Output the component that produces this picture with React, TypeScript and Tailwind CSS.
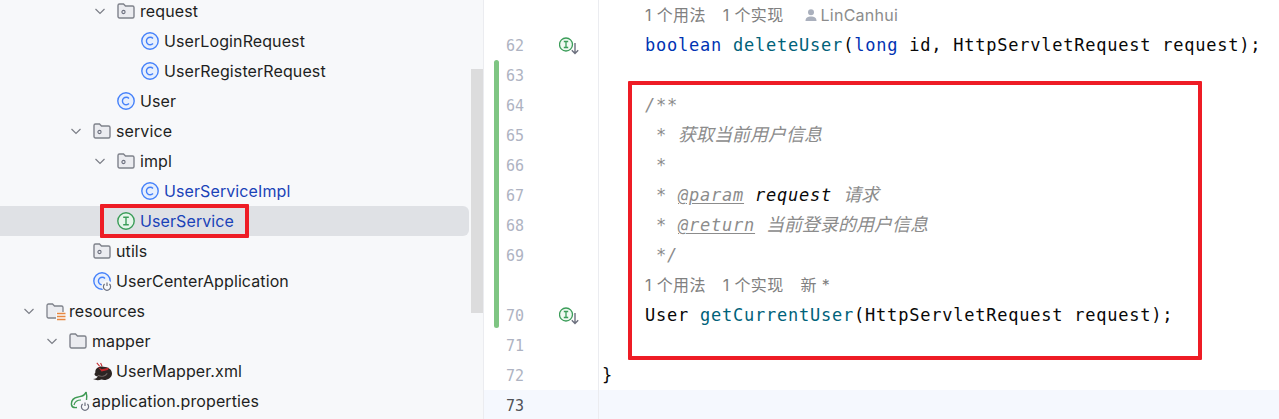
import type { ReactNode } from 'react'

const ui = 'font-["Inter","Noto_Sans_CJK_SC",sans-serif]'

function Chevron() {
  return (
    <svg width="16" height="16" viewBox="0 0 16 16" fill="none" stroke="#7c7f87" strokeWidth="1.2" className="shrink-0">
      <path d="M3.5 6 L8 10.5 L12.5 6" />
    </svg>
  )
}

function PackageIcon() {
  return (
    <svg width="18" height="16" viewBox="0 0 18 16" fill="none" className="-ml-px shrink-0">
      <path
        d="M1 2.5 A1.5 1.5 0 0 1 2.5 1 H6.5 L8.5 3 H15.5 A1.5 1.5 0 0 1 17 4.5 V13.5 A1.5 1.5 0 0 1 15.5 15 H2.5 A1.5 1.5 0 0 1 1 13.5 Z"
        fill="#ebecf0"
        stroke="#7f828b"
        strokeWidth="1.4"
      />
      <circle cx="6.5" cy="9" r="1.6" stroke="#6c707e" strokeWidth="1.1" fill="none" />
    </svg>
  )
}

function FolderIcon() {
  return (
    <svg width="18" height="16" viewBox="0 0 18 16" fill="none" className="-ml-px shrink-0">
      <path
        d="M1 2.5 A1.5 1.5 0 0 1 2.5 1 H6.5 L8.5 3 H15.5 A1.5 1.5 0 0 1 17 4.5 V13.5 A1.5 1.5 0 0 1 15.5 15 H2.5 A1.5 1.5 0 0 1 1 13.5 Z"
        fill="#ebecf0"
        stroke="#7f828b"
        strokeWidth="1.4"
      />
    </svg>
  )
}

function ResourcesIcon() {
  return (
    <svg width="20" height="18" viewBox="0 0 20 18" fill="none" className="-ml-px mt-[2px] shrink-0">
      <path
        d="M1 2.5 A1.5 1.5 0 0 1 2.5 1 H6.5 L8.5 3 H15.5 A1.5 1.5 0 0 1 17 4.5 V13.5 A1.5 1.5 0 0 1 15.5 15 H2.5 A1.5 1.5 0 0 1 1 13.5 Z"
        fill="#ebecf0"
        stroke="#7f828b"
        strokeWidth="1.3"
      />
      <rect x="10" y="9" width="10" height="9" fill="#f7f8fa" />
      <path d="M11 10.5 H19.5 M11 13.5 H19.5 M11 16.5 H19.5" stroke="#e8873f" strokeWidth="1.6" />
    </svg>
  )
}

function ClassIcon({ run }: { run?: boolean }) {
  return (
    <svg width="18" height="18" viewBox="0 0 18 18" fill="none" className="-ml-px shrink-0 overflow-visible">
      <circle cx="9" cy="9" r="8.2" fill="#e7effd" stroke="#4682fa" strokeWidth="1.4" />
      <path d="M12 6.4 A3.8 3.8 0 1 0 12 11.6" stroke="#4682fa" strokeWidth="1.4" />
      {run && (
        <>
          <circle cx="14" cy="14" r="5.5" fill="#f7f8fa" />
          <path d="M14 10.5 V14 M11.6 12 A3.6 3.6 0 1 0 16.4 12" stroke="#6c707e" strokeWidth="1.2" />
        </>
      )}
    </svg>
  )
}

function InterfaceIcon() {
  return (
    <svg width="18" height="18" viewBox="0 0 18 18" fill="none" className="-ml-px shrink-0">
      <circle cx="9" cy="9" r="8.2" fill="#e6f5ea" stroke="#3b9d59" strokeWidth="1.4" />
      <path d="M6.2 5.2 H11.8 M9 5.2 V12.8 M6.2 12.8 H11.8" stroke="#3b9d59" strokeWidth="1.4" />
    </svg>
  )
}

function BirdIcon() {
  return (
    <svg width="19" height="19" viewBox="0 0 20 20" fill="none" className="-ml-[1px] shrink-0">
      <path d="M0 18 C3 18 4.5 16.5 5 15 C2 15 0.5 13 2.5 11 C2 7 6 4 11 5 C16 5 20 8 20 12 C20 17 14 20 9 18.5 C6 19.5 3 19.5 0 18 Z" fill="#2c2523" />
      <path d="M5 5 L9 7.5 L17 6 L15.5 8.5 L9 10 Z" fill="#c6272c" />
      <path d="M4 1 L7 4.5 M8 1 L9.5 4.5" stroke="#c6272c" strokeWidth="1.1" />
      <path d="M5 14 C9 16 13 15 15 12" stroke="#6d6360" strokeWidth="1.1" />
    </svg>
  )
}

function SpringIcon() {
  return (
    <svg width="20" height="20" viewBox="0 0 20 20" fill="none" className="shrink-0">
      <path d="M16 1 C15 5 12 5 8 6 C3 7 1 10 1.5 14 C2 16 4 17 7 16.5" stroke="#3f9a54" strokeWidth="1.4" />
      <path d="M4 14 C5 10 8 9 11 9" stroke="#3f9a54" strokeWidth="1.2" />
      <path d="M16 1 C17 4 17 6 16.5 9" stroke="#3f9a54" strokeWidth="1.4" />
      <circle cx="15" cy="15" r="5" fill="#f7f8fa" />
      <path d="M15 11.5 V15 M12.6 13 A3.6 3.6 0 1 0 17.4 13" stroke="#6c707e" strokeWidth="1.2" />
    </svg>
  )
}

function TreeRow({
  indent,
  open,
  icon,
  label,
  blue,
  selected,
}: {
  indent: string
  open?: boolean
  icon: ReactNode
  label: string
  blue?: boolean
  selected?: boolean
}) {
  return (
    <div className={`flex h-[30px] w-[469px] items-center rounded-r-md ${indent} ${selected ? 'bg-[#dfe1e5]' : ''}`}>
      <span className="flex w-[16px] shrink-0 justify-center">{open && <Chevron />}</span>
      <span className="ml-[10px] flex w-[16px] shrink-0 items-center">{icon}</span>
      <span className={`ml-[6px] text-[16px] tracking-[0.1px] ${blue ? 'text-[#1a43b8]' : 'text-[#1e1f22]'}`}>{label}</span>
    </div>
  )
}

function Sidebar() {
  return (
    <aside className={`relative w-[484px] shrink-0 overflow-hidden border-r border-[#ebecf0] bg-[#f7f8fa] ${ui}`}>
      <div className="-mt-[4px]">
        <TreeRow indent="pl-[92px]" open icon={<PackageIcon />} label="request" />
        <TreeRow indent="pl-[116px]" icon={<ClassIcon />} label="UserLoginRequest" />
        <TreeRow indent="pl-[116px]" icon={<ClassIcon />} label="UserRegisterRequest" />
        <TreeRow indent="pl-[92px]" icon={<ClassIcon />} label="User" />
        <TreeRow indent="pl-[68px]" open icon={<PackageIcon />} label="service" />
        <TreeRow indent="pl-[92px]" open icon={<PackageIcon />} label="impl" />
        <TreeRow indent="pl-[116px]" icon={<ClassIcon />} label="UserServiceImpl" blue />
        <TreeRow indent="pl-[92px]" icon={<InterfaceIcon />} label="UserService" blue selected />
        <TreeRow indent="pl-[68px]" icon={<PackageIcon />} label="utils" />
        <TreeRow indent="pl-[68px]" icon={<ClassIcon run />} label="UserCenterApplication" />
        <TreeRow indent="pl-[21px]" open icon={<ResourcesIcon />} label="resources" />
        <TreeRow indent="pl-[44px]" open icon={<FolderIcon />} label="mapper" />
        <TreeRow indent="pl-[68px]" icon={<BirdIcon />} label="UserMapper.xml" />
        <TreeRow indent="pl-[44px]" icon={<SpringIcon />} label="application.properties" />
      </div>
      {/* overlay scrollbar */}
      <div className="absolute left-[471px] top-[69px] h-[244px] w-[12px] bg-[#dcdcdd]" />
      {/* annotation on the selected file */}
      <div className="absolute left-[100px] top-[204px] h-[34px] w-[149px] rounded-[1px] border-4 border-[#ee1c25]" />
    </aside>
  )
}

function GutterIcon() {
  return (
    <svg width="22" height="20" viewBox="0 0 22 20" fill="none" className="shrink-0">
      <circle cx="7" cy="7.5" r="6.5" fill="#f0f9f2" stroke="#3b9d59" strokeWidth="1.3" />
      <path d="M4.8 4.5 H9.2 M7 4.5 V10.5 M4.8 10.5 H9.2" stroke="#3b9d59" strokeWidth="1.3" />
      <path d="M16 6 V16.5 M12.8 13.3 L16 16.5 L19.2 13.3" stroke="#6c707e" strokeWidth="1.4" />
    </svg>
  )
}

const gutterRows: { num?: string; mark?: boolean; current?: boolean }[] = [
  {},
  { num: '62', mark: true },
  { num: '63' },
  { num: '64' },
  { num: '65' },
  { num: '66' },
  { num: '67' },
  { num: '68' },
  { num: '69' },
  {},
  { num: '70', mark: true },
  { num: '71' },
  { num: '72' },
  { num: '73', current: true },
]

function Gutter() {
  return (
    <div className='relative w-[115px] shrink-0 border-r border-[#ebecf0] font-["DejaVu_Sans_Mono",monospace] text-[15px]'>
      {gutterRows.map((row, i) => (
        <div key={i} className={`flex h-[30px] items-center pl-[22px] ${row.current ? 'bg-[#f5f8fe] text-[#4f5157]' : 'text-[#aeb3c2]'}`}>
          <span className="mt-[2px] w-[18px]">{row.num}</span>
          {row.mark && (
            <span className="ml-[35px] mt-[3px]">
              <GutterIcon />
            </span>
          )}
        </div>
      ))}
      {/* changed lines marker */}
      <div className="absolute left-[10px] top-[60px] h-[268px] w-[5px] rounded-full bg-[#7fc583]" />
    </div>
  )
}

function Hint({ children }: { children: ReactNode }) {
  return (
    <div className={`flex h-[30px] items-center pl-[46px] text-[16px] text-[#808080] ${ui}`}>{children}</div>
  )
}

function CodeLine({ children, current }: { children?: ReactNode; current?: boolean }) {
  return (
    <div className={`h-[30px] whitespace-pre pl-[46px] leading-[30px] ${current ? 'bg-[#f5f8fe]' : ''}`}>{children}</div>
  )
}

const cjk = 'text-[18px] tracking-normal'

function Editor() {
  const kw = 'text-[#0033b3]'
  const fn = 'text-[#00627a]'
  const doc = 'italic text-[#8c8c8c]'
  return (
    <main
      className='relative min-w-0 flex-1 overflow-hidden font-["DejaVu_Sans_Mono","Noto_Sans_CJK_SC",monospace] text-[17px] tracking-[0.77px] text-[#080808]'
    >
      <Hint>
        <span className="tracking-[0.35px]">1 个用法</span>
        <span className="ml-[17px] tracking-[0.35px]">1 个实现</span>
        <svg width="14" height="14" viewBox="0 0 14 14" fill="#aab0bd" className="ml-[20px] shrink-0">
          <circle cx="7" cy="4.2" r="3" />
          <path d="M1.5 13 C1.5 9.5 4 8.5 7 8.5 C10 8.5 12.5 9.5 12.5 13 Z" />
        </svg>
        <span className="ml-[3px] tracking-[0.25px] text-[#8c8c8c]">LinCanhui</span>
      </Hint>
      <CodeLine>
        <span className={kw}>boolean</span> <span className={fn}>deleteUser</span>(<span className={kw}>long</span> id, HttpServletRequest request);
      </CodeLine>
      <CodeLine />
      <CodeLine>
        <span className={doc}>/**</span>
      </CodeLine>
      <CodeLine>
        <span className={doc}>
          {' * '}
          <span className={cjk}>获取当前用户信息</span>
        </span>
      </CodeLine>
      <CodeLine>
        <span className={doc}> *</span>
      </CodeLine>
      <CodeLine>
        <span className={doc}>
          {' * '}
          <span className="underline underline-offset-2">@param</span>{' '}
          <span className="text-[#080808]">request</span>{' '}
          <span className={cjk}>请求</span>
        </span>
      </CodeLine>
      <CodeLine>
        <span className={doc}>
          {' * '}
          <span className="underline underline-offset-2">@return</span>{' '}
          <span className={cjk}>当前登录的用户信息</span>
        </span>
      </CodeLine>
      <CodeLine>
        <span className={doc}> */</span>
      </CodeLine>
      <Hint>
        <span className="tracking-[0.35px]">1 个用法</span>
        <span className="ml-[17px] tracking-[0.35px]">1 个实现</span>
        <span className="ml-[17px] tracking-[0.35px]">新 *</span>
      </Hint>
      <CodeLine>
        User <span className={fn}>getCurrentUser</span>(HttpServletRequest request);
      </CodeLine>
      <CodeLine />
      <div className="h-[30px] whitespace-pre pl-[3px] leading-[30px]">{'}'}</div>
      <CodeLine current />
      {/* annotation around the new method */}
      <div className="absolute left-[29px] top-[81px] h-[279px] w-[574px] rounded-[1px] border-[4px] border-[#ee1c25]" />
    </main>
  )
}

export default function App() {
  return (
    <div className="flex h-[419px] w-[1279px] overflow-hidden bg-white">
      <Sidebar />
      <Gutter />
      <Editor />
    </div>
  )
}
